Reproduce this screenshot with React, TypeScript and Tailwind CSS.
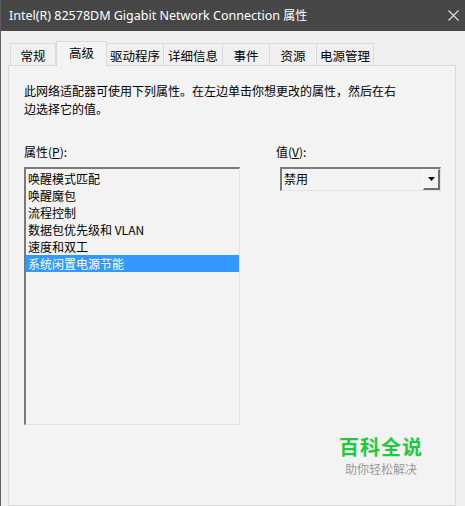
import React from "react";

const cjk = { fontFamily: '"Noto Sans CJK SC", "Noto Sans", sans-serif' };

export default function App() {
  const tabs = ["常规", "高级", "驱动程序", "详细信息", "事件", "资源", "电源管理"];
  const widths = [46, 51, 58, 60, 48, 48, 58];
  const items = ["唤醒模式匹配", "唤醒魔包", "流程控制", "数据包优先级和 VLAN", "速度和双工", "系统闲置电源节能"];
  return (
    <div className="w-[465px] h-[506px] overflow-hidden bg-[#f0f0f0] border-l border-[#5c5c5c] flex flex-col" style={cjk}>
      <div className="h-[31px] shrink-0 bg-[#474747] flex items-center justify-between pl-[8px] pr-[6px] text-white">
        <span className="text-[12.5px] leading-none" style={{ fontFamily: '"Noto Sans", "Noto Sans CJK SC", sans-serif' }}>
          Intel(R) 82578DM Gigabit Network Connection <span style={cjk} className="text-[12px]">属性</span>
        </span>
        <svg width="11" height="11" viewBox="0 0 11 11">
          <path d="M0.5 0.5 L10.5 10.5 M10.5 0.5 L0.5 10.5" stroke="#e6e6e6" strokeWidth="1.1" />
        </svg>
      </div>
      <div className="flex items-end pl-[9px] pt-[9px] h-[34px] shrink-0 relative z-10">
        {tabs.map((t, i) =>
          i === 1 ? (
            <div
              key={t}
              className="h-[25px] -mb-px bg-[#f3f3f3] border border-b-0 border-[#d9d9d9] flex items-start pt-[2px] justify-center text-[12.5px] text-black"
              style={{ width: widths[i] }}
            >
              {t}
            </div>
          ) : (
            <div
              key={t}
              className="h-[22px] bg-[#f0f0f0] border border-b-0 border-[#d9d9d9] -ml-px first:ml-0 flex items-center justify-center text-[12.5px] text-black pt-[3px]"
              style={{ width: widths[i] }}
            >
              {t}
            </div>
          )
        )}
      </div>
      <div className="ml-[7px] w-[448px] flex-1 border border-[#d9d9d9] bg-[#f3f3f3] pl-[15px] pt-[16px] text-[12px] text-black">
        <p className="leading-[18px] w-[378px]">
          此网络适配器可使用下列属性。在左边单击你想更改的属性，然后在右边选择它的值。
        </p>
        <div className="flex mt-[25px]">
          <div className="w-[216px] flex flex-col">
            <div className="leading-[18px]">
              属性(<span className="underline">P</span>):
            </div>
            <div className="mt-[6px] h-[258px] border-t-2 border-l-2 border-r border-b border-t-[#7a7a7a] border-l-[#7a7a7a] border-r-[#e3e3e3] border-b-[#e3e3e3] bg-[#f3f3f3] pt-[1px]">
              {items.map((it, i) => (
                <div
                  key={it}
                  className={
                    "h-[17px] leading-[17px] pl-[2px] " +
                    (i === 5 ? "bg-[#3399ff] text-white" : "text-black")
                  }
                >
                  {it}
                </div>
              ))}
            </div>
          </div>
          <div className="ml-[36px] flex flex-col">
            <div className="leading-[18px]">
              值(<span className="underline">V</span>):
            </div>
            <div className="mt-[6px] ml-[4px] w-[161px] h-[24px] border-t-2 border-l-2 border-r border-b border-t-[#7a7a7a] border-l-[#7a7a7a] border-r-[#e3e3e3] border-b-[#e3e3e3] bg-[#f3f3f3] flex items-stretch">
              <div className="flex-1 pl-[2px] leading-[20px]">禁用</div>
              <div className="w-[17px] border-t border-l border-r-2 border-b-2 border-t-[#f8f8f8] border-l-[#f8f8f8] border-r-[#6e6e6e] border-b-[#6e6e6e] flex items-center justify-center">
                <svg width="7" height="4" viewBox="0 0 7 4">
                  <path d="M0 0 H7 L3.5 4 Z" fill="#000" />
                </svg>
              </div>
            </div>
          </div>
        </div>
        <div className="ml-[315px] mt-[12px] flex flex-col items-center w-[84px]">
          <div className="text-[20px] leading-[20px] font-bold text-[#1fc93c] tracking-[1px]">百科全说</div>
          <div className="text-[12px] leading-[14px] text-[#9a9a9a] mt-[5px]">助你轻松解决</div>
        </div>
      </div>
    </div>
  );
}
